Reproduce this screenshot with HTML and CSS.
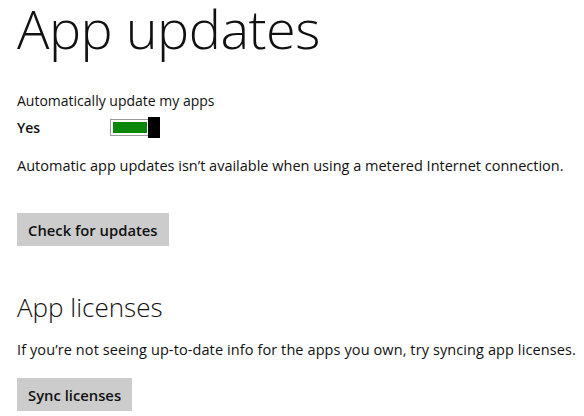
FILE: index.html
```html
<!DOCTYPE html>
<html lang="en">
  <head>
    <meta charset="UTF-8" />
    <title>App updates</title>
    <link rel="stylesheet" href="styles.css">
  </head>
  <body>
    <div class="page">
      <h1 class="title">App updates</h1>
      <div class="setting">
        <p class="label">Automatically update my apps</p>
        <div class="toggle-row">
          <span class="toggle-state">Yes</span>
          <div class="toggle">
            <div class="toggle-track">
              <div class="toggle-fill"></div>
            </div>
            <div class="toggle-thumb"></div>
          </div>
        </div>
      </div>
      <p class="note">Automatic app updates isn’t available when using a metered Internet connection.</p>
      <button class="btn">Check for updates</button>

      <h2 class="subtitle">App licenses</h2>
      <p class="note note-licenses">If you’re not seeing up-to-date info for the apps you own, try syncing app licenses.</p>
      <button class="btn btn-sync">Sync licenses</button>
    </div>
  </body>
</html>
```

FILE: styles.css
```css
* {
  margin: 0;
  padding: 0;
  box-sizing: border-box;
}
body {
  font-family: "Open Sans", "Noto Sans", sans-serif;
  background-color: #fff;
  color: #111;
  overflow: hidden;
}
.page {
  padding: 0 0 0 17px;
}
.title {
  font-size: 54px;
  font-weight: 300;
  line-height: 56px;
  letter-spacing: -0.5px;
}
.setting {
  margin-top: 35px;
}
.label {
  font-size: 14px;
  line-height: 20px;
}
.toggle-row {
  display: flex;
  align-items: center;
  height: 24px;
  margin-top: 4px;
}
.toggle-state {
  width: 93px;
  font-size: 14px;
  font-weight: 600;
}
.toggle {
  display: flex;
  align-items: center;
}
.toggle-track {
  width: 40px;
  height: 17px;
  border: 1px solid #9a9a9a;
  padding: 2px;
  background-color: #fff;
}
.toggle-fill {
  height: 100%;
  background-color: #0a870a;
}
.toggle-thumb {
  width: 12px;
  height: 21px;
  margin-left: -2px;
  background-color: #000;
}
.note {
  font-size: 14.5px;
  line-height: 20px;
  margin-top: 17px;
}
.btn {
  display: block;
  margin-top: 37px;
  height: 33px;
  padding: 0 11px;
  border: none;
  background-color: #cccccc;
  color: #111;
  font-family: inherit;
  font-size: 14.8px;
  font-weight: 600;
}
.subtitle {
  font-size: 26px;
  font-weight: 300;
  line-height: 34px;
  margin-top: 44px;
}
.note-licenses {
  margin-top: 16px;
  letter-spacing: 0.1px;
}
.btn-sync {
  margin-top: 18px;
}
```
